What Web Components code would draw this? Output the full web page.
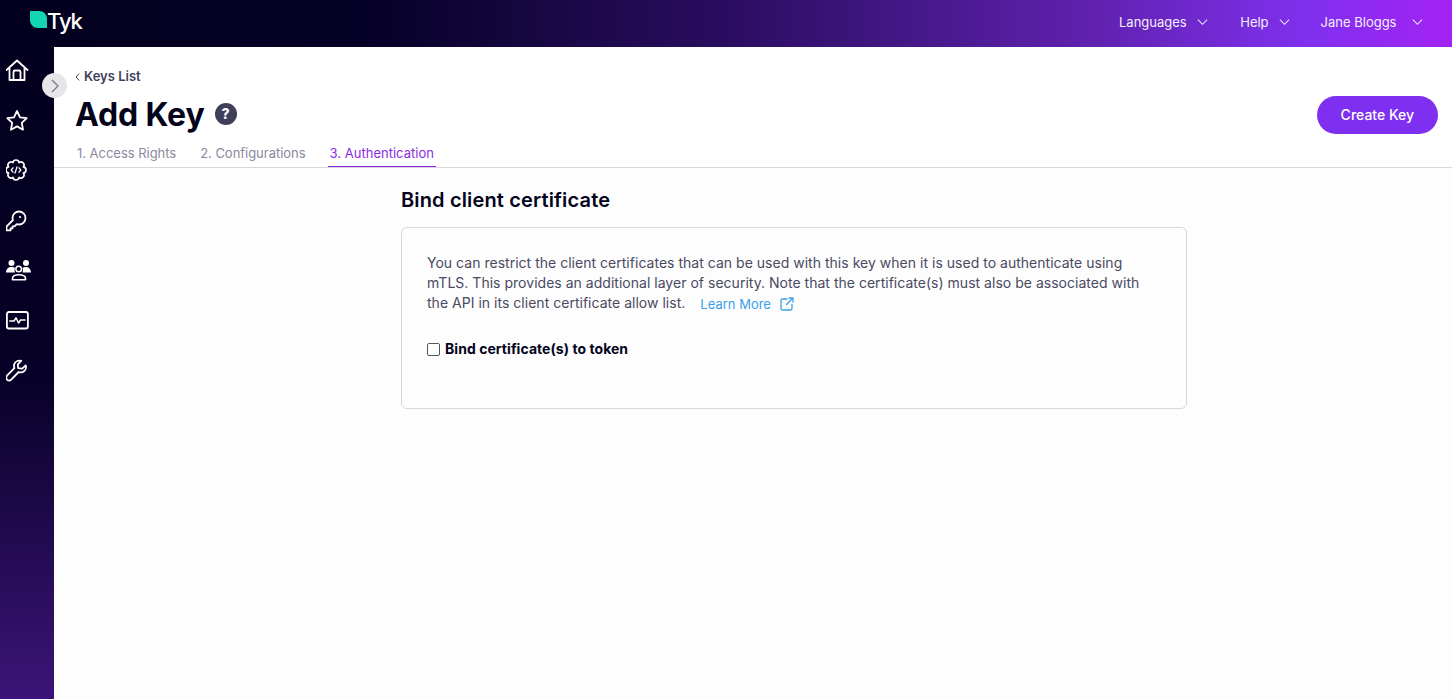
<!DOCTYPE html>
<html><head><meta charset="utf-8"><style>
html,body{margin:0;height:100%;overflow:hidden}
body{font-family:Inter,"Liberation Sans",sans-serif;color:#03031c;background:#fff}
</style></head><body>
<tyk-app></tyk-app>
<template id="t-app"><style>
:host{display:grid;grid-template:47px 1fr/54px 1fr;width:1452px;height:699px;background:#fff;position:relative;overflow:hidden}
tyk-topbar{grid-column:1/3}
</style><tyk-topbar></tyk-topbar><tyk-sidebar></tyk-sidebar><tyk-page></tyk-page></template>

<template id="t-top"><style>
:host{display:flex;align-items:center;justify-content:space-between;background:linear-gradient(90deg,#03001e 0%,#050126 25%,#2a0d60 50%,#5f21ae 75%,#8030ee 90%,#a322f2 100%);color:#f3eeff;font-size:13px}
.logo{display:flex;align-items:flex-start;margin-left:30px;margin-top:-9px;height:20px}
.logo svg{display:block;margin-top:2px}
.logo span{color:#fff;font-weight:500;font-size:22px;line-height:24px;letter-spacing:-1.1px;margin-left:0}
nav{display:flex;margin-right:29.500px;margin-top:-3px;font-weight:400}
.m{display:flex;align-items:center;gap:10px;margin-left:32.500px;line-height:16px}
.m.j{gap:15px;margin-left:31px}
.m svg{display:block}
</style>
<div class="logo"><svg width="17" height="17" viewBox="0 0 17 17"><path d="M0 0H9C13.5 0 17 3.5 17 8V17H8C3.5 17 0 13.5 0 9Z" fill="#12d6b2"/></svg><span>Tyk</span></div>
<nav><div class="m">Languages<svg width="11" height="8" viewBox="0 0 12 8"><path d="M1 1.5L6 6.5L11 1.5" fill="none" stroke="#f0eaff" stroke-width="1.1"/></svg></div>
<div class="m">Help<svg width="11" height="8" viewBox="0 0 12 8"><path d="M1 1.5L6 6.5L11 1.5" fill="none" stroke="#f0eaff" stroke-width="1.1"/></svg></div>
<div class="m j">Jane Bloggs<svg width="11" height="8" viewBox="0 0 12 8"><path d="M1 1.5L6 6.5L11 1.5" fill="none" stroke="#f0eaff" stroke-width="1.1"/></svg></div></nav></template>

<template id="t-side"><style>
:host{display:flex;flex-direction:column;align-items:flex-start;background:linear-gradient(180deg,#03001e 0%,#060126 50%,#3c1478 100%);padding:12px 0 0 6px;gap:26px}
svg{display:block;fill:none;stroke:#fff;stroke-width:1.8;stroke-linecap:round;stroke-linejoin:round}
</style>
<svg width="24" height="24" viewBox="1 0.500 24 24"><path d="M1.500 11.500L12 2L22.500 11.500M4.500 9.500V21.500H19.500V9.500M8.500 21.500V13.500C8.500 12.500 9 12 10 12H14C15 12 15.500 12.500 15.500 13.500V21.500"/></svg>
<svg width="24" height="24" viewBox="1 0.500 24 24"><path d="M12 2.500L15 8.800L21.700 9.700L16.800 14.400L18 21.200L12 17.900L6 21.200L7.200 14.400L2.300 9.700L9 8.800Z"/></svg>
<svg width="24" height="24" viewBox="2 1 24 24"><path stroke-width="1.700" d="M15.060 4.610A3.100 3.100 0 0 1 19.390 8.940A3.100 3.100 0 0 1 19.390 15.060A3.100 3.100 0 0 1 15.060 19.390A3.100 3.100 0 0 1 8.940 19.390A3.100 3.100 0 0 1 4.610 15.060A3.100 3.100 0 0 1 4.610 8.940A3.100 3.100 0 0 1 8.940 4.610A3.100 3.100 0 0 1 15.060 4.610Z"/><path stroke-width="1.300" d="M9 9.800L7.200 12L9 14.200M15 9.800L16.800 12L15 14.200M13 9L11 15"/></svg>
<svg width="24" height="24" viewBox="2 0 24 24"><path d="M15 2.500C18.500 2.500 21.500 5.500 21.500 9C21.500 12.500 18.500 15.500 15 15.500C14.200 15.500 13.500 15.300 12.800 15.100L10.500 17.400H8.500V19.400H6.500V21.400H2.500V17.500L9 11C8.700 10.300 8.500 9.700 8.500 9C8.500 5.500 11.500 2.500 15 2.500Z"/><circle cx="16" cy="8" r="1.100" fill="#fff" stroke="none"/></svg>
<svg width="26" height="24" viewBox="0 0 26 24"><circle cx="5.500" cy="4" r="3" fill="#fff" stroke="none"/><circle cx="20" cy="4" r="3" fill="#fff" stroke="none"/><path fill="#fff" stroke="none" d="M0 13.500C0 10 2.500 8 5.500 8C7 8 8 8.300 9 8.900C8.400 10.500 8.500 12 9 13.500Z"/><path fill="#fff" stroke="none" d="M25 13.500C25 10 22.500 8 20 8C18.500 8 17.500 8.300 16.500 8.900C17.100 10.500 17 12 16.500 13.500Z"/><circle cx="12.700" cy="10" r="2.800" stroke-width="1.500"/><path stroke-width="1.600" d="M6.500 20.800V19.500C6.500 17 9 15.700 12.800 15.700C16.500 15.700 19.500 17 19.500 19.500V20.800Z"/></svg>
<svg width="24" height="24" viewBox="0 0.500 24 24"><rect x="0.900" y="3.500" width="21" height="16.500" rx="2"/><path stroke-width="1.500" d="M3.800 12.500H8L10 9.300L12.500 14.500L14.500 11.500H19"/></svg>
<svg width="24" height="24" viewBox="1.800 0.500 24 24"><path d="M21.500 6.800L18 10.200L14 9.700L13.600 5.800L17 2.400C14 1.500 11 3 10 5.800C9.600 7.200 9.800 8.500 10.200 9.600L2.800 17.200C1.600 18.500 1.800 20.300 3 21.300C4.200 22.400 5.800 22.300 7 21.100L14.500 13.500C15.600 14 17 14.100 18.300 13.600C21 12.600 22.400 9.700 21.500 6.800Z"/></svg></template>

<template id="t-page"><style>
:host{display:flex;flex-direction:column;min-width:0;position:relative}
header{background:#fff;border-bottom:1px solid #d8d8dc;height:121px;box-sizing:border-box;padding:20px 14px 0 21px;display:flex;justify-content:space-between}
.back{font-size:13px;font-weight:600;line-height:18px;color:#3f3f5c;display:flex;align-items:center;gap:4px;margin-top:0}
.back svg{display:block;margin-top:1px}
h1{margin:10px 0 0;font-size:32px;line-height:40px;font-weight:700;letter-spacing:-.15px;color:#03031c;display:flex;align-items:center;gap:10px}
.q{width:22px;height:22px;border-radius:50%;background:#3f3f5c;color:#fff;font-size:14px;font-weight:800;display:flex;align-items:center;justify-content:center;letter-spacing:0;margin-top:-2px}
.tabs{display:flex;gap:20px;margin-top:8px;font-size:13px;line-height:20px;color:#8a8a9e;letter-spacing:-.03px}
.tabs span{padding:0 2px 3px;white-space:nowrap}
.tabs .on{color:#8a2be2;border-bottom:1px solid #8a2be2;letter-spacing:.02px}
.create{margin-top:29px;height:38px;padding:0 24px;border:0;border-radius:19px;background:#7f2ff0;color:#fff;font:500 14px/38px Inter,sans-serif;display:block}
main{flex:1;background:#fdfdfd;padding:19px 0 0 347px}
h2{margin:0;font-size:20px;line-height:26px;font-weight:600;color:#03031c;letter-spacing:.15px}
.card{box-sizing:border-box;width:786px;height:182px;margin-top:14px;border:1px solid #d8d8dc;border-radius:6px;padding:25px 25px 0}
p,.row{margin:0;font-size:14px;line-height:20px;color:#4a4a62;width:730px;letter-spacing:.02px}
.row{display:flex;align-items:baseline}
a{color:#3a9fe8;font-size:13px;margin-left:15px;white-space:nowrap;letter-spacing:0;position:relative;top:1px}
a svg{margin-left:9px;vertical-align:-2px}
label{display:flex;align-items:center;margin-top:26px;font-size:14px;line-height:20px;font-weight:700;color:#03031c;gap:5px;letter-spacing:.05px}
.cb{width:13px;height:13px;box-sizing:border-box;border:1px solid #55556a;border-radius:2px;background:#fff;display:block}
.tog{position:absolute;left:-12px;top:26px;width:25px;height:25px;border-radius:50%;background:#e6e6e8;display:flex;align-items:center;justify-content:center}
</style>
<header><div>
<div class="back"><svg width="5" height="8" viewBox="0 0 5 8"><path d="M4.200.6L1 4L4.200 7.400" fill="none" stroke="#3f3f5c"/></svg>Keys List</div>
<h1>Add Key<span class="q">?</span></h1>
<div class="tabs"><span>1. Access Rights</span><span>2. Configurations</span><span class="on">3. Authentication</span></div>
</div><button class="create">Create Key</button></header>
<main><h2>Bind client certificate</h2>
<div class="card"><p>You can restrict the client certificates that can be used with this key when it is used to authenticate using mTLS. This provides an additional layer of security. Note that the certificate(s) must also be associated with</p>
<div class="row"><span>the API in its client certificate allow list.</span><a>Learn More<svg width="14" height="14" viewBox="0 0 14 14" fill="none" stroke="#3a9fe8" stroke-width="1.300" stroke-linecap="round" stroke-linejoin="round"><path d="M7 2H2.500C1.500 2 1 2.500 1 3.500V11.500C1 12.500 1.500 13 2.500 13H10.500C11.500 13 12 12.500 12 11.500V7.500M6.500 7.500L13 1M9 1H13V5"/></svg></a></div>
<label><span class="cb"></span>Bind certificate(s) to token</label></div></main>
<div class="tog"><svg width="8" height="14" viewBox="0 0 8 14"><path d="M1 1L7 7L1 13" fill="none" stroke="#77777f" stroke-width="1.200"/></svg></div></template>
<script>
const def=(n,t)=>customElements.define(n,class extends HTMLElement{constructor(){super();this.attachShadow({mode:'open'}).append(document.getElementById(t).content.cloneNode(true))}});
def('tyk-topbar','t-top');def('tyk-sidebar','t-side');def('tyk-page','t-page');def('tyk-app','t-app');
</script>
</body></html>
